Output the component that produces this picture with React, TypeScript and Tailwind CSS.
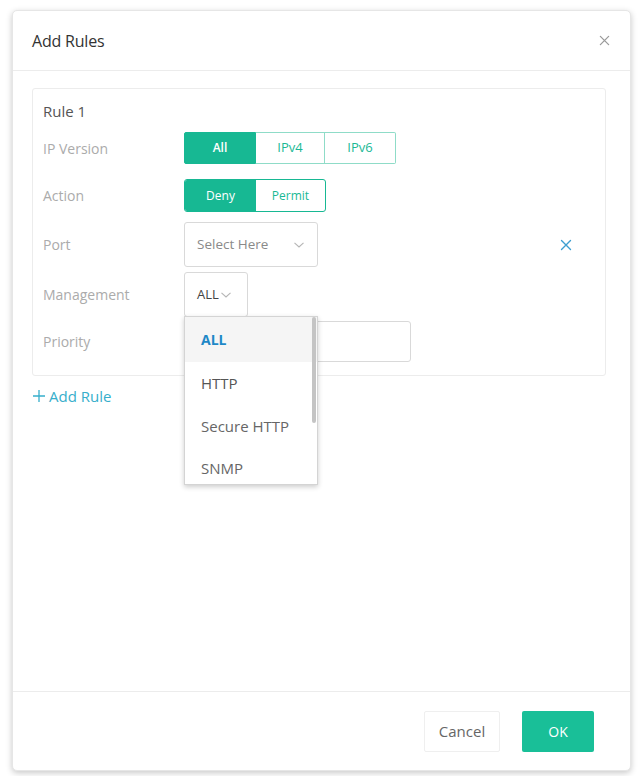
import React from 'react';

const Chevron = () => (
  <svg width="12" height="8" viewBox="0 0 12 8" fill="none" className="shrink-0">
    <path d="M1.5 1.8 6 6 10.5 1.8" stroke="#b5b5b5" strokeWidth="1.1" />
  </svg>
);

const Cross = ({ color, size }: { color: string; size: number }) => (
  <svg width={size} height={size} viewBox="0 0 12 12" fill="none">
    <path d="M1.5 1.5 10.5 10.5M10.5 1.5 1.5 10.5" stroke={color} strokeWidth="1.4" strokeLinecap="round" />
  </svg>
);

const Label = ({ children }: { children: React.ReactNode }) => (
  <div className="w-[141px] shrink-0 text-[14px] text-[#ababab]">{children}</div>
);

const App = () => {
  return (
    <div className="w-[642px] h-[776px] bg-white pt-[10px] pl-[12px] font-['Open_Sans',sans-serif]">
      <div className="w-[619px] h-[761px] bg-white rounded-[5px] border border-[#e6e6e6] shadow-[0_2px_6px_rgba(0,0,0,0.22)] flex flex-col">
        <header className="h-[60px] shrink-0 border-b border-[#ececec] flex items-center justify-between pl-[19px] pr-[20px]">
          <h1 className="text-[16px] text-[#333] tracking-[-0.2px]">Add Rules</h1>
          <Cross color="#9a9a9a" size={11} />
        </header>

        <div className="flex-1 pt-[17px] pl-[19px]">
          <div className="w-[574px] border border-[#ececec] rounded-[3px] pl-[10px] pt-[12px] pb-[13px]">
            <div className="text-[15px] text-[#555] h-[20px] leading-[20px] mb-[11px]">Rule 1</div>

            <div className="flex items-center h-[32px]">
              <Label>IP Version</Label>
              <div className="flex h-[32px] text-[13px]">
                <div className="w-[72px] flex items-center justify-center bg-[#17b893] text-white border border-[#17b893] rounded-l-[2px] font-semibold text-[12px]">All</div>
                <div className="w-[69px] flex items-center justify-center text-[#19b995] border-y border-r border-[#8fdcc8]">IPv4</div>
                <div className="w-[71px] flex items-center justify-center text-[#19b995] border-y border-r border-[#8fdcc8] rounded-r-[2px]">IPv6</div>
              </div>
            </div>

            <div className="flex items-center h-[33px] mt-[15px]">
              <Label>Action</Label>
              <div className="flex h-[33px] text-[12px] border border-[#17b893] rounded-[3px] overflow-hidden">
                <div className="w-[71px] flex items-center justify-center bg-[#17b893] text-white">Deny</div>
                <div className="w-[69px] flex items-center justify-center text-[#19b995]">Permit</div>
              </div>
            </div>

            <div className="flex items-center h-[45px] mt-[10px]">
              <Label>Port</Label>
              <div className="w-[134px] h-[45px] border border-[#d9d9d9] rounded-[3px] flex items-center justify-between pl-[12px] pr-[12px] text-[13.5px] text-[#8a8a8a]">
                <span>Select Here</span>
                <Chevron />
              </div>
              <div className="ml-[242px]">
                <Cross color="#3d9ed0" size={12} />
              </div>
            </div>

            <div className="flex items-center h-[45px] mt-[5px]">
              <Label>Management</Label>
              <div className="relative">
                <div className="w-[64px] h-[45px] border border-[#d9d9d9] rounded-[3px] flex items-center pl-[12px] gap-[1px] text-[13px] text-[#444]">
                  <span>ALL</span>
                  <Chevron />
                </div>
                <div className="absolute left-0 top-[44px] w-[134px] h-[169px] bg-white border border-[#d4d4d4] shadow-[0_2px_5px_rgba(0,0,0,0.2)] overflow-hidden z-10">
                  <div className="absolute right-[1px] top-0 w-[4px] h-[106px] bg-[#c4c4c4] rounded-[2px]" />
                  <div className="h-[45px] bg-[#f5f5f5] flex items-center pl-[16px] text-[14px] font-bold text-[#1e88c7]">ALL</div>
                  <div className="h-[43px] flex items-center pl-[16px] text-[15px] text-[#555]">HTTP</div>
                  <div className="h-[43px] flex items-center pl-[16px] text-[15px] text-[#666]">Secure HTTP</div>
                  <div className="h-[40px] flex items-center pl-[16px] text-[15px] text-[#666]">SNMP</div>
                </div>
              </div>
            </div>

            <div className="flex items-center h-[41px] mt-[4px]">
              <Label>Priority</Label>
              <div className="w-[227px] h-[41px] border border-[#d9d9d9] rounded-[3px]" />
            </div>
          </div>

          <div className="flex items-center gap-[3px] mt-[9px] text-[15px] text-[#36aecb]">
            <svg width="14" height="14" viewBox="0 0 14 14" fill="none">
              <path d="M7 1v12M1 7h12" stroke="#36aecb" strokeWidth="1.3" />
            </svg>
            <span>Add Rule</span>
          </div>
        </div>

        <footer className="h-[79px] shrink-0 border-t border-[#ececec] flex items-center justify-end gap-[22px] pr-[36px]">
          <div className="w-[76px] h-[41px] border border-[#efefef] rounded-[2px] flex items-center justify-center text-[15px] text-[#666]">Cancel</div>
          <div className="w-[72px] h-[41px] bg-[#19bf98] rounded-[2px] flex items-center justify-center text-[14px] text-white">OK</div>
        </footer>
      </div>
    </div>
  );
};

export default App;
